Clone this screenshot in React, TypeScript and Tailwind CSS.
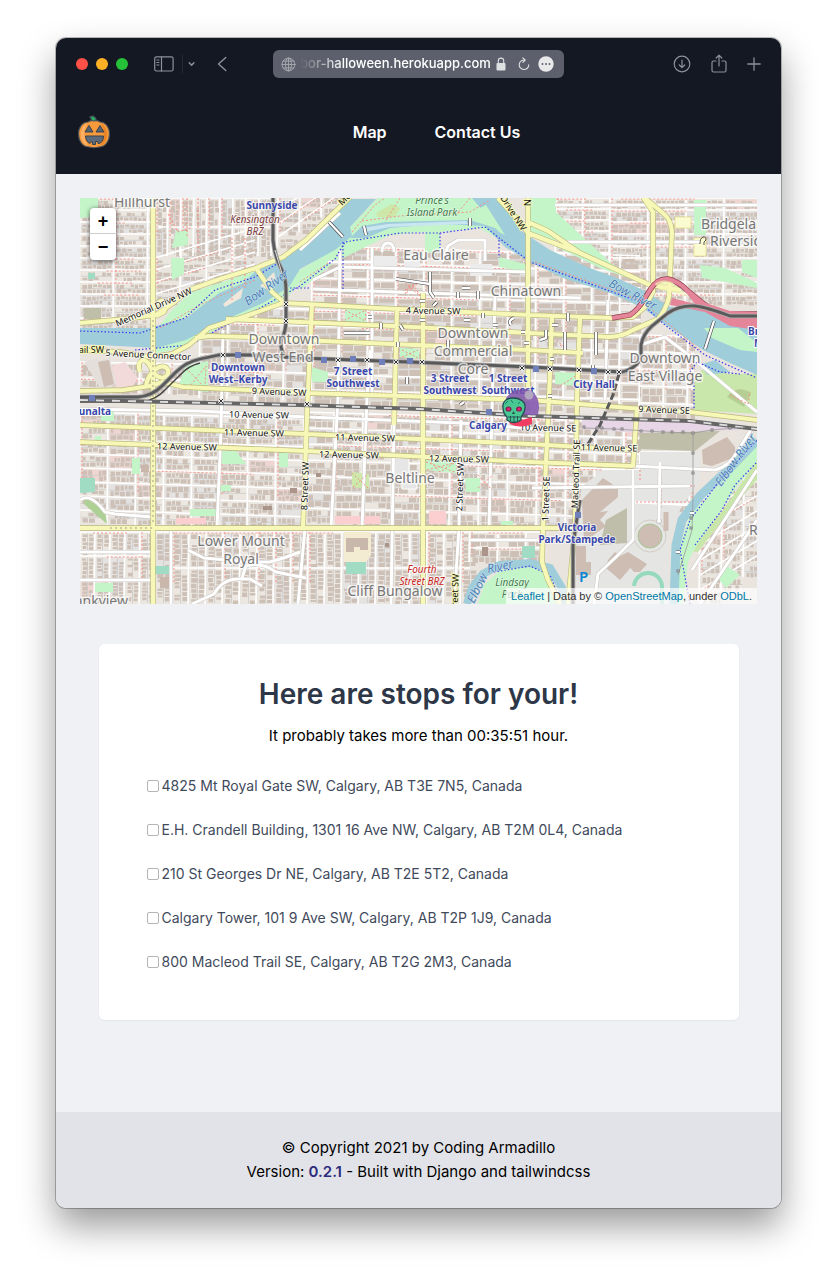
import React from "react";

const stops = [
  "4825 Mt Royal Gate SW, Calgary, AB T3E 7N5, Canada",
  "E.H. Crandell Building, 1301 16 Ave NW, Calgary, AB T2M 0L4, Canada",
  "210 St Georges Dr NE, Calgary, AB T2E 5T2, Canada",
  "Calgary Tower, 101 9 Ave SW, Calgary, AB T2P 1J9, Canada",
  "800 Macleod Trail SE, Calgary, AB T2G 2M3, Canada",
];

/* ---------- city blocks ---------- */

type District = {
  x0: number;
  x1: number;
  y0: number;
  y1: number;
  slope: number;
  bw: number;
  bh: number;
  min: number;
  max: number;
  vertical?: boolean;
};

const districts: District[] = [
  { x0: 80, x1: 152, y0: 198, y1: 320, slope: 0, bw: 34, bh: 12, min: 2, max: 5 },
  { x0: 155, x1: 272, y0: 198, y1: 256, slope: 0, bw: 13, bh: 29, min: 3, max: 7, vertical: true },
  { x0: 155, x1: 255, y0: 258, y1: 300, slope: -0.3, bw: 26, bh: 12, min: 3, max: 7 },
  { x0: 278, x1: 345, y0: 198, y1: 248, slope: -0.7, bw: 22, bh: 13, min: 3, max: 8 },
  { x0: 80, x1: 200, y0: 362, y1: 392, slope: 0.02, bw: 30, bh: 16, min: 4, max: 10 },
  { x0: 200, x1: 312, y0: 306, y1: 398, slope: 0.03, bw: 28, bh: 16, min: 4, max: 10 },
  { x0: 312, x1: 640, y0: 246, y1: 400, slope: 0.03, bw: 28, bh: 16, min: 7, max: 16 },
  { x0: 610, x1: 757, y0: 198, y1: 305, slope: 0, bw: 38, bh: 12, min: 2, max: 6 },
  { x0: 556, x1: 610, y0: 198, y1: 262, slope: 0, bw: 27, bh: 11, min: 2, max: 6 },
  { x0: 640, x1: 694, y0: 335, y1: 412, slope: 0.03, bw: 24, bh: 17, min: 5, max: 11 },
  { x0: 80, x1: 305, y0: 412, y1: 524, slope: 0.03, bw: 28, bh: 14, min: 2, max: 6 },
  { x0: 305, x1: 640, y0: 412, y1: 524, slope: 0.03, bw: 29, bh: 16, min: 3, max: 9 },
  { x0: 80, x1: 152, y0: 532, y1: 604, slope: 0, bw: 15, bh: 24, min: 2, max: 4, vertical: true },
  { x0: 155, x1: 470, y0: 532, y1: 604, slope: 0, bw: 17, bh: 36, min: 2, max: 5, vertical: true },
  { x0: 470, x1: 542, y0: 532, y1: 562, slope: 0, bw: 28, bh: 16, min: 4, max: 9 },
  { x0: 640, x1: 690, y0: 452, y1: 520, slope: 0, bw: 25, bh: 17, min: 3, max: 6 },
  { x0: 700, x1: 757, y0: 500, y1: 604, slope: -0.6, bw: 22, bh: 15, min: 2, max: 4 },
];

function buildCity() {
  let seed = 4711;
  const rnd = () => {
    seed = (seed * 1103515245 + 12345) & 0x7fffffff;
    return seed / 0x7fffffff;
  };
  let ground = "";
  let greys = "";
  let warm = "";
  let houses = "";
  let streets = "";
  let lanes = "";
  let paths = "";
  for (const d of districts) {
    const at = (x: number, y: number) => y + (x - d.x0) * d.slope;
    for (let y = d.y0; y < d.y1; y += d.bh) {
      streets += `M${d.x0} ${y}L${d.x1} ${at(d.x1, y).toFixed(1)}`;
      if (rnd() > 0.35) {
        const s = d.x0 + rnd() * (d.x1 - d.x0) * 0.4;
        const e = s + (d.x1 - d.x0) * 0.5;
        paths += `M${s.toFixed(1)} ${(at(s, y) + 1).toFixed(1)}L${e.toFixed(1)} ${(at(e, y) + 1).toFixed(1)}`;
      }
      for (let x = d.x0; x < d.x1; x += d.bw) {
        const by = at(x, y) + 1.5;
        const w = Math.min(d.bw - 2.5, d.x1 - x);
        const h = d.bh - 2.5;
        const block = `M${x + 1.5} ${by.toFixed(1)}h${w}v${h}h${-w}z`;
        const k = rnd();
        if (k < 0.32) greys += block;
        else if (k < 0.37) warm += block;
        else ground += block;
        if (d.vertical) {
          lanes += `M${x + d.bw / 2} ${by.toFixed(1)}v${h}`;
          for (const ox of [2, d.bw / 2 + 1]) {
            let yy = by + 1;
            while (yy < by + h - 2) {
              const bh = d.min + rnd() * (d.max - d.min);
              const bw = d.bw / 2 - 4 + rnd() * 1.8;
              const dx = ox + rnd();
              if (rnd() > 0.1) houses += `M${(x + dx).toFixed(1)} ${yy.toFixed(1)}h${bw.toFixed(1)}v${bh.toFixed(1)}h${(-bw).toFixed(1)}z`;
              yy += bh + 1;
            }
          }
        } else {
          lanes += `M${x + 1} ${(by + h / 2).toFixed(1)}h${w}`;
          for (const oy of [0.8, h / 2 + 0.8]) {
            let xx = x + 2.5;
            while (xx < x + w - 1) {
              const bw = Math.min(d.min + rnd() * (d.max - d.min), x + w + 1 - xx);
              const bh = Math.max(2, h / 2 - 2.5 + rnd() * 2);
              const dy = oy + rnd() * 0.8;
              if (rnd() > 0.14) houses += `M${xx.toFixed(1)} ${(by + dy).toFixed(1)}h${bw.toFixed(1)}v${bh.toFixed(1)}h${(-bw).toFixed(1)}z`;
              xx += bw + 1;
            }
          }
        }
      }
    }
    for (let x = d.x0; x <= d.x1; x += d.bw) {
      const y = at(x, d.y0);
      streets += `M${x} ${y.toFixed(1)}L${x - 1} ${(y + d.y1 - d.y0).toFixed(1)}`;
      if (rnd() > 0.5) paths += `M${x + 2} ${y.toFixed(1)}v${((d.y1 - d.y0) * 0.7).toFixed(1)}`;
    }
  }
  return { ground, greys, warm, houses, streets, lanes, paths };
}

const city = buildCity();

const yellowRoads = [
  "M80 323L125 319L156 315L173 303L189 290L223 278L256 268L283 257L306 240L350 197",
  "M153 198V604",
  "M80 350L120 352L150 357L172 354L189 345L209 328L243 317L283 303L306 304L377 308L530 315L613 318L633 317L645 307L653 292V212L643 197",
  "M195 338L209 336L249 337L300 340L530 350L583 353",
  "M226 319L300 322L393 326L530 333L610 337Q624 336 633 330L658 319Q666 310 669 297L672 232Q671 220 664 214L645 198",
  "M80 391L123 390L150 386L163 382L183 387L249 390L306 393L530 400L630 408L690 412L757 420",
  "M80 425L306 434L530 444L633 450",
  "M80 442L306 451L530 462L633 466",
  "M80 528H575",
  "M312 303L307 415L303 528",
  "M397 307L394 425",
  "M423 293V604",
  "M528 198V400",
  "M552 317L549 398L543 528L542 562L548 580L560 604",
  "M580 317L577 398L575 528L568 604",
  "M637 408L633 467",
  "M498 198L518 220L528 233L580 253L650 285L680 290",
  "M528 222L548 231L580 253",
  "M256 268L272 292L285 303",
  "M140 372C136 360 145 356 150 366C158 384 170 378 168 370C163 360 148 372 146 386",
  "M155 308C160 295 170 302 164 312L156 316",
];

const whiteRoads = [
  "M340 213L300 250",
  "M328 262H372V248M382 252Q382 243 388 243T394 252M442 262L448 246L458 240H485V261",
  "M313 280L340 267L530 272",
  "M313 289L423 293L580 298",
  "M372 262V398",
  "M340 250L338 398L331 528",
  "M370 350L367 398L362 528",
  "M394 425L391 604",
  "M495 295L489 528",
  "M461 420L459 528L454 604",
  "M608 300L605 400",
  "M80 409L200 411L306 417L461 423L577 432",
  "M223 330L221 430L217 528",
  "M555 205L757 205",
  "M552 242L700 242",
  "M633 466L715 470Q730 466 737 452L752 428",
  "M532 488L690 486",
  "M633 470V540L615 558L598 574L594 604",
  "M660 462L659 520",
  "M470 540H545",
  "M305 528L298 604",
  "M171 530V604",
  "M188 550L204 558L226 560L250 562L270 562Q285 558 300 552",
  "M192 604L214 594Q222 580 236 579H250L262 586",
  "M242 578L246 566Q262 562 276 572L306 578",
  "M80 500Q90 492 105 512L115 514L152 517",
  "M80 552H152",
  "M80 580H152",
  "M692 570L757 470",
  "M700 604L757 520",
  "M640 345L665 337L690 356L757 412",
];

const lrt = [
  "M80 397H138Q152 396 162 386L176 372Q186 362 200 359L219 355L253 355L300 358L410 362L530 367L622 372Q638 368 641 356V345Q643 334 652 326L668 313Q680 305 695 306Q706 307 730 316H757",
  "M273 198V240Q275 258 281 268Q286 278 286 290V320Q286 332 281 340Q280 350 285 356",
  "M580 500L577 518L573 545V604",
];

const footBlue = [
  "M80 331L140 333L185 318L215 290L255 277L280 262",
  "M135 350L190 345L215 331L260 308L300 286L335 259L345 242L400 233H440L485 227L530 262L640 302L665 325L705 355L757 378",
  "M440 233V248",
  "M690 604L680 550L690 520L720 480L757 440",
  "M695 545L722 510L735 485L757 462",
  "M494 572L530 566L550 575L560 600",
  "M499 240V258",
  "M690 372L697 362L720 372L740 374",
  "M343 242V290",
  "M290 288H310",
  "M694 408L694 378",
];

const stations = [
  [92, 398], [238, 355], [324, 360], [353, 359], [382, 362], [410, 361], [489, 412], [536, 369], [594, 371], [578, 515],
];

const crossings = [
  [286, 304], [286, 321], [223, 355], [338, 360], [367, 360], [396, 362], [422, 362], [522, 368], [550, 369], [579, 370], [608, 372], [619, 372], [221, 401], [307, 404],
];

const footbridges = [
  "M329 222L343 237", "M364 226L366 235", "M470 218V226", "M344 333H370", "M430 272V292L434 298",
  "M396 279L430 284", "M458 292V298", "M478 291V299", "M462 288H470", "M437 302L433 306",
  "M420 301H425", "M420 320H425", "M464 320H470", "M493 325H498", "M521 332H525", "M524 343H529",
  "M568 313V321", "M552 325H558", "M546 330V338L540 340", "M565 332V350", "M596 332V355", "M714 321L705 349",
  "M593 365V371", "M381 323V329", "M400 325L403 330", "M368 317H372", "M398 342V347", "M448 340V350",
  "M511 325Q508 320 514 318", "M676 552H680", "M690 513H694", "M460 405L464 402", "M407 377V384",
  "M550 359H554", "M548 396H552", "M483 313V318",
];

type Label = { x: number; y: number; text: string; r?: number };

const areas: Label[] = [
  { x: 142, y: 207, text: "Hillhurst" },
  { x: 436, y: 260, text: "Eau Claire" },
  { x: 526, y: 296, text: "Chinatown" },
  { x: 284, y: 344, text: "Downtown" },
  { x: 283, y: 362, text: "West End" },
  { x: 473, y: 338, text: "Downtown" },
  { x: 473, y: 356, text: "Commercial" },
  { x: 473, y: 374, text: "Core" },
  { x: 665, y: 363, text: "Downtown" },
  { x: 665, y: 381, text: "East Village" },
  { x: 410, y: 483, text: "Beltline" },
  { x: 241, y: 546, text: "Lower Mount" },
  { x: 241, y: 564, text: "Royal" },
  { x: 395, y: 596, text: "Cliff Bungalow" },
];

const stationNames: Label[] = [
  { x: 272, y: 209, text: "Sunnyside" },
  { x: 238, y: 371, text: "Downtown" },
  { x: 238, y: 383, text: "West–Kerby" },
  { x: 353, y: 375, text: "7 Street" },
  { x: 353, y: 387, text: "Southwest" },
  { x: 450, y: 382, text: "3 Street" },
  { x: 450, y: 394, text: "Southwest" },
  { x: 508, y: 382, text: "1 Street" },
  { x: 508, y: 394, text: "Southwest" },
  { x: 594, y: 388, text: "City Hall" },
  { x: 488, y: 429, text: "Calgary" },
  { x: 577, y: 531, text: "Victoria" },
  { x: 577, y: 543, text: "Park/Stampede" },
];

const streetNames: Label[] = [
  { x: 155, y: 310, text: "Memorial Drive NW", r: -24 },
  { x: 148, y: 358, text: "5 Avenue Connector", r: 3 },
  { x: 433, y: 314, text: "4 Avenue SW", r: 1 },
  { x: 279, y: 395, text: "9 Avenue SW", r: 2 },
  { x: 664, y: 413, text: "9 Avenue SE", r: 2 },
  { x: 259, y: 418, text: "10 Avenue SW", r: 1 },
  { x: 548, y: 431, text: "10 Avenue SE", r: 1 },
  { x: 254, y: 436, text: "11 Avenue SW", r: 1 },
  { x: 365, y: 441, text: "11 Avenue SW", r: 1 },
  { x: 609, y: 451, text: "11 Avenue SE", r: 1 },
  { x: 187, y: 450, text: "12 Avenue SW", r: 1 },
  { x: 349, y: 458, text: "12 Avenue SW", r: 1 },
  { x: 459, y: 462, text: "12 Avenue SW", r: 1 },
  { x: 308, y: 486, text: "8 Street SW", r: -88 },
  { x: 463, y: 487, text: "2 Street SW", r: -88 },
  { x: 549, y: 499, text: "1 Street SE", r: -88 },
  { x: 579, y: 474, text: "Macleod Trail SE", r: -88 },
];

function Labels({ items, className, halo }: { items: Label[]; className: string; halo: number }) {
  return (
    <g className={className} textAnchor="middle" stroke="#fff" strokeOpacity="0.7" strokeWidth={halo} paintOrder="stroke" strokeLinejoin="round">
      {items.map((l) => (
        <text key={`${l.text}-${l.x}-${l.y}`} x={l.x} y={l.y} transform={l.r ? `rotate(${l.r} ${l.x} ${l.y})` : undefined}>
          {l.text}
        </text>
      ))}
    </g>
  );
}

function Strokes({ paths, ...rest }: { paths: string[] } & React.SVGProps<SVGPathElement>) {
  return <path d={paths.join("")} fill="none" strokeLinejoin="round" {...rest} />;
}

function CityMap() {
  return (
    <svg
      viewBox="80 198 677 406"
      preserveAspectRatio="xMidYMid slice"
      className="block h-full w-full font-['Noto_Sans',sans-serif]"
      role="img"
      aria-label="Map of downtown Calgary"
    >
      <rect x="80" y="198" width="677" height="406" fill="#e9e4de" />

      <path d={city.ground} fill="#ece8e1" />
      <path d={city.greys} fill="#e4e3e2" />
      <path d={city.warm} fill="#f0d6d2" />
      <path d={city.lanes} stroke="#d2d0ce" strokeWidth="1" />
      <path d={city.houses} fill="#cdc0b7" />
      <path d={city.streets} stroke="#fff" strokeWidth="1.6" />
      <path d={city.paths} stroke="#f78d84" strokeWidth="0.9" strokeDasharray="2 2" />

      {/* plazas and empty lots downtown */}
      <path d="M374 256H397V270H374ZM470 264H492V276H470ZM404 254H420V268H404Z" fill="#ececec" />
      <path d="M395 458H409V476H395ZM402 478H417V489H402Z" fill="#e6e6e6" stroke="#fff" />
      <path d="M335 516H380V524H335ZM429 511H446V524H429ZM176 518H206V524H176Z" fill="#fbcfcf" />

      {/* exhibition grounds and rail yards */}
      <path d="M582 486L604 470H640V452H700V480L680 510L668 540L670 604H576V528Z" fill="#e5e5e3" />
      <path d="M582 500L603 478L618 488V497L600 512L608 511L600 520L606 526L584 542Z" fill="#cdbdb3" />
      <path d="M606 520L627 508V543L600 545Z" fill="#bfbeaa" />
      <path d="M576 546H586V562H591V575H576Z" fill="#cdbdb3" />
      <path d="M608 560L615 552L632 566L620 580L606 568ZM620 556L628 552L647 564L640 572L634 572Z" fill="#cdbdb3" />
      <path d="M634 586A14 14 0 0 1 662 588V604" fill="none" stroke="#96dabe" strokeWidth="4" />
      <circle cx="650" cy="536" r="16" fill="none" stroke="#d3cdc4" />
      <circle cx="650" cy="536" r="12" fill="#cdbdb3" stroke="#a7c695" />
      <path d="M666 531V512" fill="none" stroke="#cdbdb3" strokeWidth="5" />
      <path d="M582 419L690 422L745 426L740 430L640 433L582 429Z" fill="#e7d6e5" />
      <path d="M640 433L720 431L695 451L638 449Z" fill="#bfbea9" />
      <path d="M702 450L727 437L735 447V457L712 466L703 464Z" fill="#cdbdb3" />
      <path d="M633 502L690 505M632 486H690" fill="none" stroke="#fff" strokeWidth="2.5" />
      <circle cx="659" cy="521" r="2.5" fill="#fff" stroke="#aaa" strokeWidth="0.7" />
      <path d="M632 470V530M630 486H695M632 502H690M640 470V482M661 462V510" fill="none" stroke="#f78d84" strokeDasharray="2 2" />

      {/* parks */}
      <path d="M300 290V270L340 245L350 227L378 198H488L500 215L505 243L480 228L440 232V250L425 254V232L390 235L335 262Z" fill="#c4f5c9" />
      <path d="M156 330L170 312L190 293L255 271L275 262L262 280L215 300L185 325Z" fill="#c4f5c9" />
      <path d="M156 354L190 345L235 318L285 300L300 283V268L275 292L232 314L186 339L156 344Z" fill="#c4f5c9" />
      <path d="M197 310L208 305L212 312L185 321L180 320Z" fill="#f4e7c2" />
      <path d="M530 198H556V212L612 264L650 286L600 268L530 234Z" fill="#c4f5c9" />
      <path d="M700 265L725 268L757 283V288L702 278ZM742 260H757V278L742 272Z" fill="#c4f5c9" />
      <path d="M694 200H706V235H694Z" fill="#c4f5c9" />
      <path d="M171 258H184V274L172 280ZM176 231H188V245L172 248Z" fill="#c4f5c9" />
      <path d="M675 217H691V228H675ZM694 238H706V256H694Z" fill="#fbfbd2" stroke="#e4dc82" strokeWidth="0.7" />
      <path d="M185 366L208 361V392L178 388ZM345 309H366V322L345 321ZM312 367L328 372V382H312ZM400 348L419 349V359L400 357ZM555 372L577 373V386L555 384ZM499 257L525 264V272L499 267Z" fill="#c4f5c9" />
      <path d="M352 472L369 474V489L352 487Z" fill="#cde8ab" />
      <path d="M425 460L456 462V473L425 470ZM465 478H480V492H466ZM190 509H216V516H190ZM279 453H288V467H279ZM221 451H236L246 464H221Z" fill="#c4f5c9" />
      <path d="M101 410L114 411V421H101ZM95 583H113V592H95ZM132 458H140V474H132ZM501 521H513V525H501ZM219 485H231V491H219ZM95 436H101V440H95Z" fill="#c4f5c9" />
      <path d="M80 478H95V492L80 493ZM155 566H169V574H155ZM346 562H366V574H346ZM522 546H535V558H522ZM88 273H95V279H88Z" fill="#a0dcc3" />
      <path d="M344 532H371V555L366 562H344Z" fill="#f3ecd2" />
      <path d="M346 538H368V550H360V547H354V552H346ZM141 465H149V472H141ZM160 577H169V588H160Z" fill="#c9b7ac" />
      <path d="M263 506H272V510H263ZM290 488H297V493H290ZM482 547H488V556H482ZM316 473H321V477H316ZM385 543H389V547H385Z" fill="#ab9489" />
      <path d="M84 308H101V319H84Z" fill="#bfbea9" />
      <path d="M694 378L702 370L730 374H757V414L694 410Z" fill="#c9e7aa" />
      <path d="M727 397Q737 384 751 393L744 407Z" fill="#b6cd94" />
      <path d="M690 551L700 540L730 500L757 460V480L736 503L712 534L698 552Z" fill="#c9e7aa" />
      <path d="M676 604L680 545L690 515L725 478L757 440V462L738 485L716 518L697 545L688 562L683 604Z" fill="#c4f5c9" />
      <path d="M717 577L727 566L740 575L726 588Z" fill="#c4f5c9" />
      <path d="M478 604L484 585L500 570L530 565L550 574L562 604Z" fill="#c4f5c9" />
      <path d="M376 213L392 204L400 208L395 217L378 217Z" fill="#cde7a8" />
      <path d="M80 198H98V216L80 218Z" fill="#c4f5c9" />
      <path d="M85 498L105 510L107 524L84 504Z" fill="#aed095" />
      <path d="M112 366L125 362L138 378L132 388H116Z" fill="#f2dada" />
      <path d="M84 362L97 358L110 388L102 391ZM98 360L110 359L116 384L105 388Z" fill="#e4dfda" />
      <path d="M98 362L109 360L114 384L104 387Z" fill="#cdbdb3" />

      {/* water */}
      <g fill="#9fcdda">
        <path d="M80 328H148L186 318L219 293L243 283L263 264L276 260L306 243L350 199H376L350 227L352 236L335 250L300 269L289 287L263 303L236 315L209 328L186 340L156 348L80 344Z" />
        <path d="M350 238L362 226L386 222L470 220L495 228L532 253V263L505 247L485 226L440 224L390 228L366 238Z" />
        <path d="M472 198H501L520 230L530 237L550 250L587 267L617 278L643 290L670 307L697 308L712 315L757 330V375L730 363L703 350L663 323L643 308L610 293L563 278L530 262L500 230L482 210Z" />
        <path d="M699 365L715 360L730 372L708 375Z" />
      </g>
      <path d="M480 208L486 205L505 235L499 232Z" fill="#c4f5c9" />
      <path d="M362 228L388 224L466 221L468 224L390 227L364 232Z" fill="#c9e6f1" />
      <path d="M704 328L738 328L757 343V352L740 350L728 345L712 338Z" fill="#c4f5c9" />
      <path d="M223 304L243 288L241 298L225 307ZM260 286L274 272L276 280L266 289Z" fill="#eee7da" />
      <path d="M757 440L730 468L700 496L682 520L676 545L674 604" fill="none" stroke="#9fcdda" strokeWidth="9" />
      <path d="M467 604L472 588L483 574L500 565L530 563L550 568L562 588L566 604" fill="none" stroke="#9fcdda" strokeWidth="8" />

      {/* paths and streets */}
      <Strokes paths={whiteRoads} stroke="#c9c5c1" strokeWidth="4" />
      <Strokes paths={whiteRoads} stroke="#fff" strokeWidth="3" />
      <Strokes
        paths={["M160 328L200 305L255 280", "M352 232L375 205L385 198", "M362 221L400 216L470 212L490 200", "M400 198L385 222", "M470 198L455 216", "M535 262L640 300L700 350", "M300 282L330 262", "M345 310L365 321L366 310L345 320", "M402 350L418 358M402 357L418 350", "M426 462L455 472M427 470L454 463L440 472L430 461", "M352 473L368 488M353 487L368 474", "M402 280L420 296L412 282L405 294L418 283L403 291", "M557 388L577 375", "M730 395L748 404L750 392", "M186 368L205 388L206 366L190 386", "M560 345L570 352L556 340", "M478 475L492 490M478 488L492 476", "M168 214L178 232L190 228M187 198V236", "M198 198V254", "M232 238V300M245 238V290"]}
        stroke="#f78d84"
        strokeDasharray="2 2"
      />
      <Strokes paths={footBlue} stroke="#3b3bea" strokeWidth="1.2" strokeDasharray="1.5 2" />

      {/* arterials */}
      <Strokes paths={yellowRoads} stroke="#b9b979" strokeWidth="5.4" />
      <Strokes paths={yellowRoads} stroke="#f7f8b7" strokeWidth="4.2" />
      <path d="M153 320V524M110 528H152" stroke="#a59e8b" strokeWidth="1" strokeDasharray="2 3" />
      <path d="M612 318L630 315Q638 310 645 298L650 290Q657 278 668 279Q678 281 688 291L704 304Q715 313 732 314H757" fill="none" stroke="#8f4152" strokeWidth="5.4" />
      <path d="M612 318L630 315Q638 310 645 298L650 290Q657 278 668 279Q678 281 688 291L704 304Q715 313 732 314H757" fill="none" stroke="#e5859a" strokeWidth="4" />
      <path d="M684 290L706 303L730 311L757 312V330L730 326L705 312L670 305L672 298L695 304Z" fill="#e5859a" />
      <path d="M655 284Q662 278 672 282L688 296L660 290Z" fill="#f7f8b7" opacity="0.7" />

      {/* rail */}
      <Strokes paths={lrt} stroke="#aaa" strokeWidth="4.6" />
      <Strokes paths={lrt} stroke="#595959" strokeWidth="2.8" />
      <path d="M80 402H142Q156 400 166 389L180 375Q188 366 200 363" fill="none" stroke="#444" strokeWidth="1.4" />
      <path d="M275 250L284 280" fill="none" stroke="#fff" strokeWidth="0.8" />
      <path d="M80 400L300 405L420 409L530 416L690 421L757 429" fill="none" stroke="#666" strokeWidth="4" />
      <path d="M80 400L300 405L420 409L530 416L690 421L757 429" fill="none" stroke="#dedede" strokeWidth="1.8" strokeDasharray="8 8" />
      <path d="M619 374L613 395L600 425L588 444" fill="none" stroke="#595959" strokeWidth="3" strokeDasharray="7 3" />
      <path d="M584 428L615 429L663 432L693 433L712 430L745 427M693 433V500L692 530L678 575" fill="none" stroke="#999" strokeWidth="0.8" />
      <g fill="#fff" stroke="#666" strokeWidth="0.8">
        {[[584, 427], [597, 428], [602, 428], [614, 429], [622, 429], [641, 431], [652, 431], [663, 432], [672, 432], [683, 432], [693, 433], [712, 430], [730, 428], [693, 453], [693, 473], [691, 518], [691, 528], [678, 571]].map(([x, y]) => (
          <rect key={`${x}-${y}`} x={x - 1} y={y - 1} width="2" height="2" />
        ))}
      </g>
      <Strokes paths={footbridges} stroke="#444" strokeWidth="3.6" />
      <Strokes paths={footbridges} stroke="#fff" strokeWidth="2.4" />
      <path d={crossings.map(([x, y]) => `M${x - 2} ${y - 2}l4 4m0 -4l-4 4`).join("")} stroke="#eee" strokeWidth="3" />
      <path d={crossings.map(([x, y]) => `M${x - 2} ${y - 2}l4 4m0 -4l-4 4`).join("")} stroke="#333" strokeWidth="1" />
      <g fill="#6f7fb9">
        {stations.map(([x, y]) => (
          <rect key={`${x}-${y}`} x={x - 3} y={y - 3} width="6" height="6" />
        ))}
      </g>

      {/* names */}
      <Labels items={areas} className="fill-[#777] text-[14px]" halo={3} />
      <g className="fill-[#777] text-[14px]" stroke="#fff" strokeOpacity="0.7" strokeWidth="3" paintOrder="stroke">
        <text x="701" y="229">Bridgeland</text>
        <text x="710" y="246">Riverside</text>
        <text x="749" y="535">Ramsay</text>
        <text x="128" y="606" textAnchor="end">Bankview</text>
      </g>
      <Labels items={streetNames} className="fill-[#111] text-[9px]" halo={2} />
      <g className="fill-[#111] text-[9px]" stroke="#f7f8b7" strokeWidth="2" paintOrder="stroke">
        <text x="104" y="353" textAnchor="end">Trail SW</text>
        <text x="342" y="206" transform="rotate(-44 342 206)">Memorial</text>
        <text x="500" y="198" transform="rotate(57 500 198)">Drive NW</text>
        <text x="531" y="206" transform="rotate(-90 531 206)">N</text>
        <text x="457" y="622" transform="rotate(-88 457 622)">4 Street SW</text>
      </g>
      <Labels items={stationNames} className="fill-[#3a48ab] text-[10px] font-bold" halo={2} />
      <g className="fill-[#3a48ab] text-[10px] font-bold" stroke="#fff" strokeWidth="2" paintOrder="stroke">
        <text x="111" y="415" textAnchor="end">Sunalta</text>
        <text x="748" y="335">Bridgeland</text>
        <text x="754" y="347">Memorial</text>
      </g>
      <Labels items={[{ x: 255, y: 223, text: "Kensington" }, { x: 255, y: 235, text: "BRZ" }]} className="fill-[#7b3c40] text-[10px] italic" halo={2} />
      <Labels items={[{ x: 422, y: 573, text: "Fourth" }, { x: 422, y: 585, text: "Street BRZ" }]} className="fill-[#c9251d] text-[10px] italic" halo={2} />
      <Labels items={[{ x: 432, y: 204, text: "Prince's" }, { x: 432, y: 216, text: "Island Park" }, { x: 512, y: 586, text: "Lindsay" }, { x: 512, y: 598, text: "Park" }]} className="fill-[#3b7a48] text-[10px] italic" halo={1} />
      <g className="fill-[#4f80b5] text-[12px] italic" stroke="#cbe4ee" strokeWidth="1" paintOrder="stroke">
        <text x="248" y="306" transform="rotate(-36 248 306)">Bow River</text>
        <text x="608" y="286" transform="rotate(28 608 286)">Bow River</text>
        <text x="721" y="487" transform="rotate(-54 721 487)">Elbow River</text>
        <text x="474" y="604" transform="rotate(-64 474 604)">Elbow</text>
        <text x="488" y="573" transform="rotate(-12 488 573)">River</text>
      </g>
      <text x="579" y="582" className="fill-[#0786d4] text-[15px] font-semibold">P</text>
      <path d="M700 244Q700 238 703 237T706 240L704 242V245" fill="none" stroke="#555" />

      {/* markers */}
      <g>
        <path d="M507 417Q516 424 522 420L532 417V424Q520 429 510 424Z" fill="#f23e62" />
        <path d="M506 398Q512 389 526 389Q539 392 539 408L538 415H520L512 421Z" fill="#7d52ab" opacity="0.85" />
        <path d="M526 393Q537 391 538 407L532 416Z" fill="#9166b9" opacity="0.7" />
        <circle cx="529" cy="395" r="4.500" fill="#b7b3bf" opacity="0.85" />
        <path d="M503 408C502 401 507 398 513 398S526 401 525 408C525 413 522 415 521 417V420Q514 425 507 420V417C505 415 503 413 503 408Z" fill="#48c792" stroke="#244c53" strokeWidth="1.3" />
        <path d="M505 404L508 401M511 400L513 403M520 402L518 404" stroke="#217f68" strokeWidth="1" />
        <ellipse cx="508.500" cy="409" rx="3" ry="2.600" fill="#7e234e" />
        <ellipse cx="519" cy="409" rx="3" ry="2.600" fill="#7e234e" />
        <circle cx="508.500" cy="409" r="1.500" fill="#f01b76" />
        <circle cx="519" cy="409" r="1.500" fill="#f01b76" />
        <path d="M513.500 411L512 414H515Z" fill="#244c53" />
        <path d="M508 417H520M510.500 416V421M514 416V422M517.500 416V421" stroke="#244c53" strokeWidth="0.9" />
      </g>
    </svg>
  );
}

function Pumpkin() {
  return (
    <svg viewBox="0 0 32 34" className="h-[34px] w-8" aria-hidden="true">
      <path d="M13 6Q14 4 12 2L15 1Q19 3 18 7Z" fill="#28ae62" stroke="#46515a" strokeWidth="1.2" />
      <path d="M16 6Q19 5 22 7C28 7 31.500 13 31.500 19S28 32 21 32Q16 33.500 11 32C4 32 .5 25 .5 19S4 7 10 7Q13 5 16 6Z" fill="#f79a3c" stroke="#46515a" strokeWidth="1.2" />
      <path d="M9 8C3 11 1 20 5 27Q7 30 10 31Q3 20 9 8Z" fill="#ffb066" />
      <path d="M23 8C29 12 31 20 27 27Q25 30 22 31Q29 20 23 8Z" fill="#e98527" />
      <path d="M11 10.500L15 17H7ZM22 10.500L26 17H18Z" fill="#566370" stroke="#39424f" strokeWidth="1" strokeLinejoin="round" />
      <path d="M7.500 21H25.500Q25.500 27 21 28.500H20V26.500H17.500V29.500H14.500V27H12V28.500Q8 27 7.500 21Z" fill="#5c6a7b" stroke="#39424f" strokeWidth="1" strokeLinejoin="round" />
    </svg>
  );
}

const iconProps = { fill: "none", stroke: "currentColor", strokeLinecap: "round", strokeLinejoin: "round" } as const;

function Toolbar() {
  return (
    <div className="grid h-[52px] grid-cols-[1fr_auto_1fr] items-center px-5 text-[#8d9099]">
      <div className="flex items-center">
        <div className="flex gap-2">
          <button type="button" aria-label="Close window" className="size-3 rounded-full bg-[#ff5148]" />
          <button type="button" aria-label="Minimize window" className="size-3 rounded-full bg-[#ffb125]" />
          <button type="button" aria-label="Zoom window" className="size-3 rounded-full bg-[#26c138]" />
        </div>
        <button type="button" aria-label="Show sidebar" className="ml-[26px]">
          <svg viewBox="0 0 20 16" className="h-4 w-5" {...iconProps} strokeWidth="1.200">
            <rect x=".7" y=".8" width="18.400" height="14.200" rx="1.800" />
            <path d="M7.500 1V15" />
            <path d="M2.800 4H5M2.800 6.500H5M2.800 9H5" strokeWidth="1" />
          </svg>
        </button>
        <span className="ml-2 h-[18px] w-px bg-[#262a36]" />
        <button type="button" aria-label="Tab groups" className="ml-1">
          <svg viewBox="0 0 10 10" className="size-2.5" {...iconProps} strokeWidth="1.500">
            <path d="M2.300 3.800L4.600 6.200L6.900 3.800" />
          </svg>
        </button>
        <button type="button" aria-label="Back" className="ml-5">
          <svg viewBox="0 0 12 16" className="h-4 w-3" {...iconProps} strokeWidth="1.400">
            <path d="M8.800 1.500L1.500 8L8.800 14.500" />
          </svg>
        </button>
      </div>

      <div className="flex h-7 w-[291px] items-center rounded-md bg-[#5d606c] px-2">
        <svg viewBox="0 0 14 14" className="size-[15px] shrink-0 text-[#a5a7ae]" {...iconProps} strokeWidth=".9">
          <circle cx="7" cy="7" r="6" />
          <ellipse cx="7" cy="7" rx="2.800" ry="6" />
          <path d="M1 7H13M7 1V13M2 3.800H12M2 10.200H12" />
        </svg>
        <input
          aria-label="Address"
          readOnly
          defaultValue="bor-halloween.herokuapp.com"
          className="ml-1 min-w-0 flex-1 bg-transparent text-right text-[13px] font-medium text-white outline-none [mask-image:linear-gradient(to_right,transparent,black_44px)]"
        />
        <svg viewBox="0 0 10 14" className="ml-1.5 h-3.5 w-2.5 shrink-0 text-[#dedfe1]">
          <rect x=".5" y="6" width="9" height="7.500" rx="1" fill="currentColor" />
          <path d="M2.300 6V3.800A2.700 2.700 0 0 1 7.700 3.800V6" fill="none" stroke="currentColor" strokeWidth="1.100" />
        </svg>
        <button type="button" aria-label="Reload" className="ml-3 text-[#dedfe1]">
          <svg viewBox="0 0 12 14" className="h-3.5 w-3" {...iconProps} strokeWidth="1.100">
            <path d="M6.500 3A4.800 4.800 0 1 0 10.800 7.800M4.800 .8L7.200 3L4.900 5.300" />
          </svg>
        </button>
        <button type="button" aria-label="Page menu" className="mr-0.5 ml-2">
          <svg viewBox="0 0 16 16" className="size-4">
            <circle cx="8" cy="8" r="7.700" fill="#e9e9ec" />
            <path d="M4.500 8h.01M8 8h.01M11.500 8h.01" stroke="#5d606c" strokeWidth="1.900" strokeLinecap="round" />
          </svg>
        </button>
      </div>

      <div className="flex items-center justify-end gap-5">
        <button type="button" aria-label="Downloads">
          <svg viewBox="0 0 18 18" className="size-[18px]" {...iconProps} strokeWidth="1.200">
            <circle cx="9" cy="9" r="7.800" />
            <path d="M9 5V12.500M6.300 10L9 12.700L11.700 10" />
          </svg>
        </button>
        <button type="button" aria-label="Share">
          <svg viewBox="0 0 16 20" className="h-5 w-4" {...iconProps} strokeWidth="1.200">
            <path d="M5 7H2.500Q1 7 1 8.500V16.500Q1 18 2.500 18H13.500Q15 18 15 16.500V8.500Q15 7 13.500 7H11M8 12V1.500M5.200 4L8 1.200L10.800 4" />
          </svg>
        </button>
        <button type="button" aria-label="New tab">
          <svg viewBox="0 0 14 14" className="size-3.5" {...iconProps} strokeWidth="1.300">
            <path d="M7 .8V13.200M.8 7H13.200" />
          </svg>
        </button>
      </div>
    </div>
  );
}

export default function App() {
  return (
    <div className="min-h-screen bg-white px-14 pt-[38px] pb-[74px] font-[Inter,sans-serif] text-black">
      <div className="overflow-hidden rounded-[10px] bg-[#f0f1f5] shadow-[0_0_0_1px_rgba(0,0,0,0.25),0_18px_36px_rgba(0,0,0,0.4)]">
        <header className="bg-[#141823]">
          <Toolbar />
          <div className="flex h-[84px] items-center pr-[18px] pl-[22px]">
            <a href="#home" aria-label="Home">
              <Pumpkin />
            </a>
            <nav className="flex flex-1 justify-center gap-12 font-semibold text-white">
              <a href="#map">Map</a>
              <a href="#contact">Contact Us</a>
            </nav>
          </div>
        </header>

        <main className="px-6 pt-6 pb-[92px]">
          <section className="relative aspect-[677/406] overflow-hidden" aria-label="Route map">
            <CityMap />
            <div className="absolute top-2.5 left-2.5 flex w-[26px] flex-col overflow-hidden rounded bg-white font-['Liberation_Sans',sans-serif] text-lg leading-none font-bold shadow-[0_1px_5px_rgba(0,0,0,0.65)]">
              <button type="button" aria-label="Zoom in" className="h-[26px] border-b border-[#ccc]">
                +
              </button>
              <button type="button" aria-label="Zoom out" className="h-[26px]">
                −
              </button>
            </div>
            <p className="absolute right-0 bottom-0 bg-white/70 px-[5px] font-['Liberation_Sans',sans-serif] text-[11px] leading-4 text-[#333]">
              <a href="#leaflet" className="text-[#0078a8]">Leaflet</a> | Data by ©{" "}
              <a href="#osm" className="text-[#0078a8]">OpenStreetMap</a>, under{" "}
              <a href="#odbl" className="text-[#0078a8]">ODbL</a>.
            </p>
          </section>

          <section className="mx-auto mt-10 max-w-[640px] rounded-md bg-white px-12 pt-8 pb-12 shadow-xs">
            <h1 className="text-center text-[28px] leading-9 font-semibold text-[#2d3748]">Here are stops for your!</h1>
            <p className="mt-3 text-center text-[15px] leading-6">It probably takes more than 00:35:51 hour.</p>
            <ul className="mt-7 flex flex-col gap-6">
              {stops.map((stop) => (
                <li key={stop}>
                  <label className="flex items-center gap-[3px] text-sm text-[#3f4a5b]">
                    <input type="checkbox" className="size-3 shrink-0 appearance-none rounded-xs border border-[#b4b4b4] bg-white checked:bg-[#3b82f6]" />
                    {stop}
                  </label>
                </li>
              ))}
            </ul>
          </section>
        </main>

        <footer className="bg-[#e2e3e8] p-6 text-center text-[15px] leading-6">
          <p>© Copyright 2021 by Coding Armadillo</p>
          <p>
            Version: <a href="#version" className="font-semibold text-[#2c2a7c]">0.2.1</a> - Built with Django and tailwindcss
          </p>
        </footer>
      </div>
    </div>
  );
}
